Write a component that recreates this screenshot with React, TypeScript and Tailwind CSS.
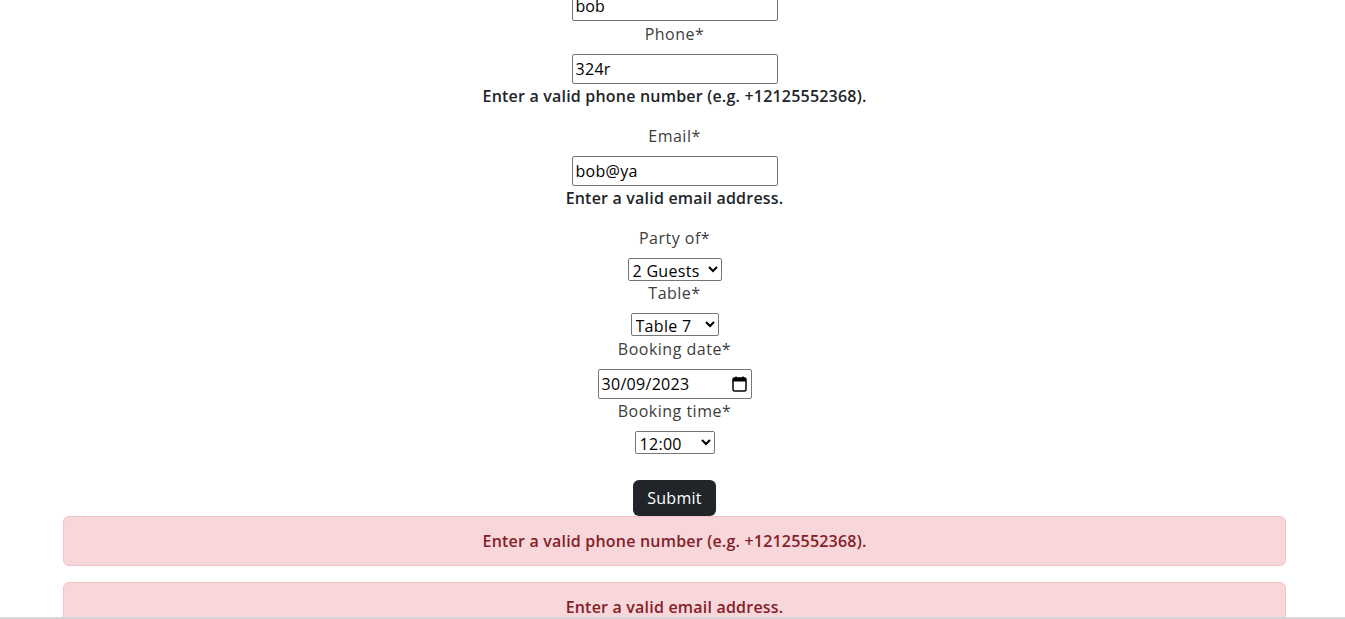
export default function App() {
  return (
    <main className="min-h-screen bg-white text-[16px] leading-6 text-[#212529] font-['Open_Sans',_'Liberation_Sans',_sans-serif]">
      <form className="flex flex-col items-center text-center pl-[4px]">
        {/* name input, scrolled mostly out of view */}
        <input
          type="text"
          defaultValue="bob"
          className="mt-[-9px] w-[206px] h-[30px] border border-[#767676] rounded-[2px] px-[3px] text-[16px] text-black"
        />
        <label className="mt-[1px] mb-2 text-[#3d3d3d] tracking-[0.5px]">Phone*</label>
        <input
          type="text"
          defaultValue="324r"
          className="w-[206px] h-[30px] border border-[#767676] rounded-[2px] px-[3px] text-[16px] text-black tracking-[0.3px]"
        />
        <p className="font-semibold text-[#212529] mb-4 tracking-[0.2px]">Enter a valid phone number (e.g. +12125552368).</p>

        <label className="mb-2 text-[#3d3d3d] tracking-[0.5px]">Email*</label>
        <input
          type="text"
          defaultValue="bob@ya"
          className="w-[206px] h-[30px] border border-[#767676] rounded-[2px] px-[3px] text-[16px] text-black tracking-[0.3px]"
        />
        <p className="font-semibold text-[#212529] mb-4 tracking-[0.2px]">Enter a valid email address.</p>

        <label className="mb-2 text-[#3d3d3d] tracking-[0.5px]">Party of*</label>
        <select defaultValue="2" className="w-[94px] h-[23px] border border-[#767676] rounded-[2px] text-[16px] leading-5 text-black bg-white tracking-[0.3px]">
          <option value="1">1 Guest</option>
          <option value="2">2 Guests</option>
        </select>

        <label className="mb-2 text-[#3d3d3d] tracking-[0.5px]">Table*</label>
        <select defaultValue="7" className="w-[88px] h-[23px] border border-[#767676] rounded-[2px] text-[16px] leading-5 text-black bg-white tracking-[0.3px]">
          <option value="7">Table 7</option>
        </select>

        <label className="mt-[1px] mb-2 text-[#3d3d3d] tracking-[0.5px]">Booking date*</label>
        <div className="w-[154px] h-[30px] border border-[#767676] rounded-[2px] pl-[3px] pr-[4px] flex items-center justify-between text-black tracking-[0.3px]">
          <span>30/09/2023</span>
          <svg width="15" height="16" viewBox="0 0 15 16" fill="none">
            <rect x="1" y="2" width="13" height="13" rx="1.5" stroke="#000" strokeWidth="1.5" />
            <rect x="1" y="2" width="13" height="3.5" fill="#000" />
            <line x1="4" y1="0.5" x2="4" y2="3" stroke="#000" strokeWidth="1.5" />
            <line x1="11" y1="0.5" x2="11" y2="3" stroke="#000" strokeWidth="1.5" />
          </svg>
        </div>

        <label className="mb-2 text-[#3d3d3d] tracking-[0.5px]">Booking time*</label>
        <select defaultValue="12:00" className="w-[80px] h-[23px] border border-[#767676] rounded-[2px] text-[16px] leading-5 text-black bg-white tracking-[0.3px]">
          <option value="12:00">12:00</option>
        </select>

        <button
          type="button"
          className="mt-[26px] w-[83px] h-[36px] rounded-[6px] bg-[#212529] text-white text-[16px] tracking-[0.3px]"
        >
          Submit
        </button>
      </form>

      <div className="mx-[63px] w-[1223px]">
        <div className="mb-4 h-[50px] flex items-center justify-center rounded-[6px] border border-[#f5c2c7] bg-[#f8d7da] text-[#842029] font-semibold tracking-[0.2px]">
          Enter a valid phone number (e.g. +12125552368).
        </div>
        <div className="mb-4 h-[50px] flex items-center justify-center rounded-[6px] border border-[#f5c2c7] bg-[#f8d7da] text-[#842029] font-semibold tracking-[0.2px]">
          Enter a valid email address.
        </div>
      </div>

      <div className="fixed bottom-0 left-0 right-0 h-[2px] bg-[#d6d6d6]" />
    </main>
  )
}
